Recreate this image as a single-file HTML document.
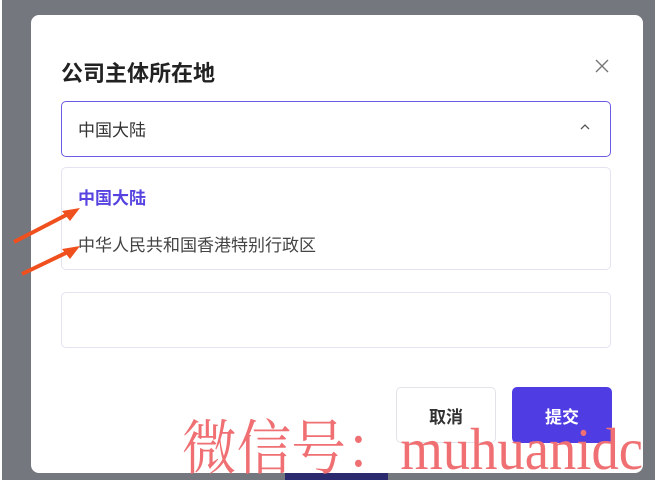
<!DOCTYPE html>
<html><head><meta charset="utf-8"><style>
body{margin:0;width:655px;height:486px;background:#fff;position:relative;overflow:hidden;font-family:"Liberation Sans","Noto Sans CJK SC",sans-serif}
.bg{position:absolute;left:2px;top:0;width:653px;height:480px;background:#75777e}
.modal{position:absolute;left:31px;top:15px;width:612px;height:458px;background:#fff;border-radius:8px}
.bar{position:absolute;left:285px;top:473px;width:103px;height:7px;background:#2b2a6e}
.t{position:absolute;white-space:nowrap}
.box{position:absolute;left:61px;width:550px;border-radius:5px;box-sizing:border-box}
.btn{position:absolute;top:387px;width:100px;height:56px;border-radius:5px;box-sizing:border-box;display:flex;align-items:center;justify-content:center;font-size:17px;font-weight:bold}
</style></head><body>
<div class="bg"></div>
<div class="modal"></div>
<div class="bar"></div>
<div class="t" style="left:61px;top:56px;font-size:22px;font-weight:bold;color:#222">公司主体所在地</div>
<svg class="t" style="left:594px;top:58px" width="16" height="16"><path d="M2 2L14 14M14 2L2 14" stroke="#777" stroke-width="1.4"/></svg>
<div class="box" style="top:101px;height:56px;border:1.5px solid #6b5ce6"></div>
<div class="t" style="left:78px;top:116px;font-size:17px;color:#333">中国大陆</div>
<svg class="t" style="left:579px;top:123px" width="12" height="8"><path d="M2 6L6 2L10 6" stroke="#555" stroke-width="1.3" fill="none"/></svg>
<div class="box" style="top:167px;height:103px;border:1px solid #e4e3f2"></div>
<div class="t" style="left:78px;top:184px;font-size:17px;font-weight:bold;color:#5744e0">中国大陆</div>
<div class="t" style="left:78px;top:231px;font-size:17px;color:#444">中华人民共和国香港特别行政区</div>
<div class="box" style="top:292px;height:56px;border:1px solid #e4e3f2"></div>
<div class="btn" style="left:396px;border:1px solid #e2e2ea;color:#333">取消</div>
<div class="btn" style="left:512px;background:#4f3de3;color:#fff">提交</div>
<svg class="t" style="left:0;top:190px" width="90" height="100">
<path d="M14 52L72 22" stroke="#f0501e" stroke-width="4"/><path d="M80 18L62 21L70 31Z" fill="#f0501e"/>
<path d="M22 84L72 60" stroke="#f0501e" stroke-width="4"/><path d="M80 56L62 59L70 69Z" fill="#f0501e"/>
</svg>
<div class="t" style="left:182px;top:416px;font-size:52px;line-height:60px;color:#ef6f72;font-family:'Liberation Serif','Noto Serif CJK SC',serif;transform:scale(1.05,1.15);transform-origin:0 0">微信号：muhuanidc</div>
</body></html>
